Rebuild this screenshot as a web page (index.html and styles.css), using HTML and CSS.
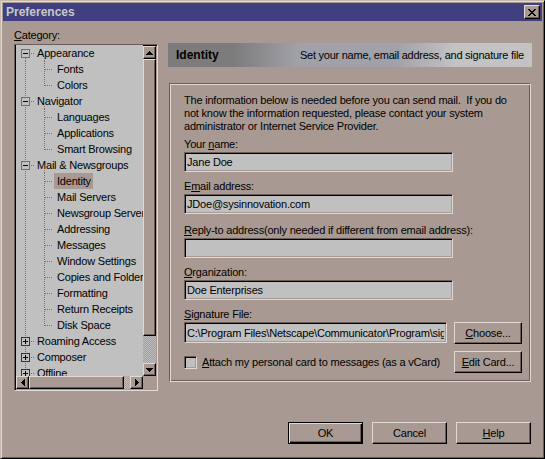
FILE: index.html
```html
<!DOCTYPE html>
<html>
<head>
    <meta charset="UTF-8">
    <title>Preferences</title>
    <link rel="stylesheet" href="styles.css">
</head>
<body>
    <div class="window">
        <div class="titlebar">
            <span class="title">Preferences</span>
            <span class="close-btn">
                <svg width="8" height="7" viewBox="0 0 8 7" shape-rendering="crispEdges"><path d="M0 0h2v1H0zM6 0h2v1H6zM1 1h2v1H1zM5 1h2v1H5zM2 2h4v1H2zM3 3h2v1H3zM2 4h4v1H2zM1 5h2v1H1zM5 5h2v1H5zM0 6h2v1H0zM6 6h2v1H6z"/></svg>
            </span>
        </div>

        <div class="content">
            <!-- category tree -->
            <div class="category">
                <div class="cat-label"><u>C</u>ategory:</div>
                <div class="tree">
                    <div class="tree-list">
                        <div class="row l1 first"><svg class="box" width="9" height="9" viewBox="0 0 9 9" shape-rendering="crispEdges"><rect x="0.5" y="0.5" width="8" height="8" fill="#c0c0c0" stroke="#7a6b65"/><path d="M2 4h5v1H2z"/></svg><span class="txt">Appearance</span></div>
                        <div class="row l2"><span class="txt">Fonts</span></div>
                        <div class="row l2 last"><span class="txt">Colors</span></div>
                        <div class="row l1 open"><svg class="box" width="9" height="9" viewBox="0 0 9 9" shape-rendering="crispEdges"><rect x="0.5" y="0.5" width="8" height="8" fill="#c0c0c0" stroke="#7a6b65"/><path d="M2 4h5v1H2z"/></svg><span class="txt">Navigator</span></div>
                        <div class="row l2"><span class="txt">Languages</span></div>
                        <div class="row l2"><span class="txt">Applications</span></div>
                        <div class="row l2 last"><span class="txt">Smart Browsing</span></div>
                        <div class="row l1 open"><svg class="box" width="9" height="9" viewBox="0 0 9 9" shape-rendering="crispEdges"><rect x="0.5" y="0.5" width="8" height="8" fill="#c0c0c0" stroke="#7a6b65"/><path d="M2 4h5v1H2z"/></svg><span class="txt">Mail &amp; Newsgroups</span></div>
                        <div class="row l2"><span class="txt selected">Identity</span></div>
                        <div class="row l2"><span class="txt">Mail Servers</span></div>
                        <div class="row l2"><span class="txt">Newsgroup Servers</span></div>
                        <div class="row l2"><span class="txt">Addressing</span></div>
                        <div class="row l2"><span class="txt">Messages</span></div>
                        <div class="row l2"><span class="txt">Window Settings</span></div>
                        <div class="row l2"><span class="txt">Copies and Folders</span></div>
                        <div class="row l2"><span class="txt">Formatting</span></div>
                        <div class="row l2"><span class="txt">Return Receipts</span></div>
                        <div class="row l2 last"><span class="txt">Disk Space</span></div>
                        <div class="row l1"><svg class="box" width="9" height="9" viewBox="0 0 9 9" shape-rendering="crispEdges"><rect x="0.5" y="0.5" width="8" height="8" fill="#c0c0c0" stroke="#3a322e"/><path d="M2 4h5v1H2zM4 2h1v5H4z"/></svg><span class="txt">Roaming Access</span></div>
                        <div class="row l1"><svg class="box" width="9" height="9" viewBox="0 0 9 9" shape-rendering="crispEdges"><rect x="0.5" y="0.5" width="8" height="8" fill="#c0c0c0" stroke="#3a322e"/><path d="M2 4h5v1H2zM4 2h1v5H4z"/></svg><span class="txt">Composer</span></div>
                        <div class="row l1"><svg class="box" width="9" height="9" viewBox="0 0 9 9" shape-rendering="crispEdges"><rect x="0.5" y="0.5" width="8" height="8" fill="#c0c0c0" stroke="#3a322e"/><path d="M2 4h5v1H2zM4 2h1v5H4z"/></svg><span class="txt">Offline</span></div>
                        <div class="row l1"><svg class="box" width="9" height="9" viewBox="0 0 9 9" shape-rendering="crispEdges"><rect x="0.5" y="0.5" width="8" height="8" fill="#c0c0c0" stroke="#3a322e"/><path d="M2 4h5v1H2zM4 2h1v5H4z"/></svg><span class="txt">Advanced</span></div>
                    </div>

                    <div class="vscroll">
                        <span class="sb-btn"><svg width="7" height="4" viewBox="0 0 7 4" shape-rendering="crispEdges"><path d="M3 0h1v1h1v1h1v1h1v1H0V3h1V2h1V1h1z"/></svg></span>
                        <span class="sb-thumb v"></span>
                        <span class="sb-track"></span>
                        <span class="sb-btn"><svg width="7" height="4" viewBox="0 0 7 4" shape-rendering="crispEdges"><path d="M0 0h7v1H6v1H5v1H4v1H3V3H2V2H1V1H0z"/></svg></span>
                    </div>
                    <div class="hscroll">
                        <span class="sb-btn"><svg width="4" height="7" viewBox="0 0 4 7" shape-rendering="crispEdges"><path d="M3 0h1v7H3V6H2V5H1V4H0V3h1V2h1V1h1z"/></svg></span>
                        <span class="sb-thumb h"></span>
                        <span class="sb-track"></span>
                        <span class="sb-btn"><svg width="4" height="7" viewBox="0 0 4 7" shape-rendering="crispEdges"><path d="M0 0h1v1h1v1h1v1h1v1H3v1H2v1H1v1H0z"/></svg></span>
                    </div>
                    <div class="corner"></div>
                </div>
            </div>

            <!-- identity panel -->
            <div class="panel">
                <div class="banner">
                    <b>Identity</b>
                    <span>Set your name, email address, and signature file</span>
                </div>

                <div class="group">
                    <p class="intro">The information below is needed before you can send mail.&nbsp; If you do<br>not know the information requested, please contact your system<br>administrator or Internet Service Provider.</p>

                    <div class="field">
                        <label class="field-label">Your <u>n</u>ame:</label>
                        <input class="textbox" type="text" value="Jane Doe">
                    </div>
                    <div class="field field-wide">
                        <label class="field-label">E<u>m</u>ail address:</label>
                        <input class="textbox" type="text" value="JDoe@sysinnovation.com">
                    </div>
                    <div class="field">
                        <label class="field-label"><u>R</u>eply-to address(only needed if different from email address):</label>
                        <input class="textbox" type="text" value="">
                    </div>
                    <div class="field">
                        <label class="field-label"><u>O</u>rganization:</label>
                        <input class="textbox" type="text" value="Doe Enterprises">
                    </div>
                    <div class="field">
                        <label class="field-label"><u>S</u>ignature File:</label>
                        <div class="sig-row">
                            <input class="textbox sig" type="text" value="C:\Program Files\Netscape\Communicator\Program\sig.txt">
                            <button class="btn small" type="button"><u>C</u>hoose...</button>
                        </div>
                    </div>
                    <div class="check-row">
                        <span class="checkbox"></span>
                        <span class="check-label"><u>A</u>ttach my personal card to messages (as a vCard)</span>
                        <button class="btn small" type="button"><u>E</u>dit Card...</button>
                    </div>
                </div>
            </div>
        </div>

        <div class="footer">
            <button class="btn default" type="button">OK</button>
            <button class="btn" type="button">Cancel</button>
            <button class="btn" type="button"><u>H</u>elp</button>
        </div>
    </div>
</body>
</html>
```

FILE: styles.css
```css
:root {
    --face: #a89a92;
    --light: #e2d9d2;
    --shadow: #6b5e58;
    --field: #c0c0c0;
    --dot: #7f6d66;
    --v1: repeating-linear-gradient(var(--dot) 0 1px, transparent 1px 2px) 9px 0 / 1px 16px no-repeat;
    --v1-first: repeating-linear-gradient(var(--dot) 0 1px, transparent 1px 2px) 9px 13px / 1px 3px no-repeat;
    --s1: repeating-linear-gradient(to right, var(--dot) 0 1px, transparent 1px 2px) 15px 8px / 4px 1px no-repeat;
    --v2: repeating-linear-gradient(var(--dot) 0 1px, transparent 1px 2px) 28px 0 / 1px 16px no-repeat;
    --v2-last: repeating-linear-gradient(var(--dot) 0 1px, transparent 1px 2px) 28px 0 / 1px 9px no-repeat;
    --v2-start: repeating-linear-gradient(var(--dot) 0 1px, transparent 1px 2px) 28px 13px / 1px 3px no-repeat;
    --s2: repeating-linear-gradient(to right, var(--dot) 0 1px, transparent 1px 2px) 29px 8px / 8px 1px no-repeat;
}

body {
    margin: 0;
    font-family: "Liberation Sans", Arial, sans-serif;
    font-size: 11px;
    letter-spacing: -0.2px;
    color: #000;
    background: var(--face);
}

u {
    text-decoration: underline;
    text-underline-offset: 1px;
}

.window {
    width: 545px;
    height: 459px;
    box-sizing: border-box;
    background: var(--face);
    border: 1px solid;
    border-color: #c4b8b0 #000 #000 #c4b8b0;
    box-shadow: inset 1px 1px var(--light), inset -1px -1px var(--shadow);
    padding: 2px;
}

/* title bar */
.titlebar {
    height: 18px;
    background: #404080;
    display: flex;
    align-items: center;
    justify-content: space-between;
    padding: 0 2px 0 3px;
}

.title {
    color: #c8c8c8;
    font-weight: bold;
    font-size: 12px;
    letter-spacing: 0;
}

.close-btn {
    width: 16px;
    height: 14px;
    box-sizing: border-box;
    display: flex;
    align-items: center;
    justify-content: center;
    background: var(--face);
    border: 1px solid;
    border-color: var(--light) #000 #000 var(--light);
    box-shadow: inset -1px -1px var(--shadow);
}

.content {
    display: flex;
    padding: 7px 0 0 11px;
}

/* left: category tree */
.category {
    width: 144px;
}

.cat-label {
    height: 14px;
    line-height: 14px;
    margin-bottom: 2px;
}

.tree {
    height: 347px;
    box-sizing: border-box;
    border: 1px solid;
    border-color: var(--shadow) var(--light) var(--light) var(--shadow);
    padding: 1px;
    box-shadow: inset 1px 1px #000, inset -1px -1px var(--face);
    display: grid;
    grid-template-columns: 1fr 13px;
    grid-template-rows: 1fr 13px;
}

.tree-list {
    background: var(--field);
    overflow: hidden;
    margin-top: -1px;
}

.row {
    height: 16px;
    line-height: 16px;
    white-space: nowrap;
    display: flex;
    align-items: center;
}

.row.l1 {
    padding-left: 5px;
    background: var(--s1), var(--v1);
}

.row.l1.open {
    background: var(--s1), var(--v1), var(--v2-start);
}

.row.l1.first {
    background: var(--s1), var(--v1-first), var(--v2-start);
}

.row.l1 .txt {
    margin-left: 4px;
}

.row.l2 {
    padding-left: 38px;
    background: var(--s2), var(--v2), var(--v1);
}

.row.l2.last {
    background: var(--s2), var(--v2-last), var(--v1);
}

.box {
    flex: none;
    display: block;
}

.txt {
    display: inline-block;
    padding: 0 2px 0 3px;
    height: 16px;
}

.txt.selected {
    background: var(--face);
}

.vscroll {
    display: flex;
    flex-direction: column;
}

.hscroll {
    display: flex;
}

.sb-btn,
.sb-thumb {
    box-sizing: border-box;
    background: var(--face);
    border: 1px solid;
    border-color: var(--light) #000 #000 var(--light);
    box-shadow: inset -1px -1px var(--shadow);
}

.sb-btn {
    width: 13px;
    height: 13px;
    flex: none;
    display: flex;
    align-items: center;
    justify-content: center;
}

.sb-thumb.v {
    height: 277px;
    flex: none;
}

.sb-thumb.h {
    width: 95px;
    flex: none;
}

.sb-track {
    flex: 1;
    background: repeating-conic-gradient(#c0c0c0 0 25%, var(--face) 0 50%) 0 0 / 2px 2px;
}

.corner {
    background: var(--face);
}

/* right: identity panel */
.panel {
    width: 364px;
    margin-left: 10px;
    padding-top: 15px;
}

.banner {
    height: 24px;
    display: flex;
    align-items: center;
    justify-content: space-between;
    padding: 0 8px;
    background: linear-gradient(to right, #7c7c7c 0%, #7c7c7c 18%, #a1a1a9 36%, #a1a1a9 63%, #c3c3c3 79%, #c3c3c3 100%);
}

.banner b {
    font-size: 12px;
    letter-spacing: 0;
}

.banner span {
    letter-spacing: -0.25px;
}

.group {
    margin: 16px 0 0 1px;
    width: 362px;
    height: 299px;
    box-sizing: border-box;
    border: 1px solid;
    border-color: var(--shadow) var(--light) var(--light) var(--shadow);
    box-shadow: inset 1px 1px var(--light), inset -1px -1px var(--shadow);
    padding: 10px 8px 0 14px;
}

.intro {
    margin: 0 0 4px;
    line-height: 13px;
}

.field {
    margin-bottom: 7px;
}

.field-wide {
    margin-bottom: 9px;
}

.field-label {
    display: block;
    height: 14px;
    line-height: 14px;
    margin-bottom: 1px;
}

.textbox {
    display: block;
    width: 269px;
    height: 20px;
    box-sizing: border-box;
    margin: 0;
    padding: 0 2px;
    font: inherit;
    letter-spacing: inherit;
    color: #000;
    background: var(--field);
    border: 1px solid;
    border-color: var(--shadow) var(--light) var(--light) var(--shadow);
    box-shadow: inset 1px 1px #000, inset -1px -1px var(--face);
    outline: none;
}

.textbox.sig {
    width: 263px;
    height: 21px;
}

.sig-row {
    display: flex;
    justify-content: space-between;
    align-items: flex-start;
}

.check-row {
    display: flex;
    align-items: center;
    margin-top: 7px;
}

.checkbox {
    width: 13px;
    height: 13px;
    box-sizing: border-box;
    background: var(--field);
    border: 1px solid;
    border-color: var(--shadow) var(--light) var(--light) var(--shadow);
    box-shadow: inset 1px 1px #000, inset -1px -1px var(--face);
    margin-right: 5px;
}

.check-row .btn {
    margin-left: auto;
}

/* buttons */
.btn {
    width: 75px;
    height: 22px;
    box-sizing: border-box;
    padding: 0;
    font: inherit;
    letter-spacing: inherit;
    color: #000;
    background: var(--face);
    border: 1px solid;
    border-color: var(--light) #000 #000 var(--light);
    box-shadow: inset -1px -1px var(--shadow);
}

.btn.small {
    width: 68px;
}

.btn.default {
    border-color: #000;
    box-shadow: inset 1px 1px var(--light), inset -1px -1px #000, inset -2px -2px var(--shadow);
}

.footer {
    display: flex;
    justify-content: flex-end;
    gap: 9px;
    margin-top: 31px;
    padding-right: 11px;
}
```
